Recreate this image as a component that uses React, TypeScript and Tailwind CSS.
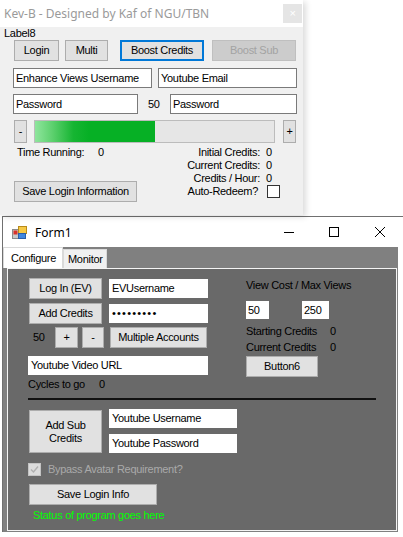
import React from 'react';
import { twMerge } from 'tailwind-merge';

// small helpers for the classic WinForms controls
const Btn = ({
  className = '',
  children,
}: {
  className?: string;
  children: React.ReactNode;
}) => (
  <div
    className={twMerge(
      'flex shrink-0 items-center justify-center border border-[#adadad] bg-[#e1e1e1] text-center text-black',
      className
    )}
  >
    {children}
  </div>
);

const Box = ({
  className = '',
  children,
}: {
  className?: string;
  children?: React.ReactNode;
}) => (
  <div className={twMerge('flex shrink-0 items-center bg-white pl-[2px] text-black', className)}>
    {children}
  </div>
);

const FormIcon = () => (
  <svg width="15" height="14" viewBox="0 0 15 14">
    <rect x="0.5" y="3.5" width="6" height="9" fill="#c9c9c9" stroke="#8a8a8a" />
    <rect x="1.5" y="4.5" width="4" height="4" fill="#d8322a" />
    <rect x="6.5" y="0.5" width="8" height="7" fill="#f6c945" stroke="#b88a1a" />
    <rect x="6.5" y="7.5" width="7" height="5" fill="#3f86e0" stroke="#2a5fa8" />
  </svg>
);

const KevWindow = () => (
  <div className="relative z-10 h-[215px] w-[303px] bg-[#f0f0f0] shadow-[3px_2px_6px_rgba(0,0,0,0.14)]">
    <div className="flex h-[27px] items-center bg-white">
      <span className="ml-[4px] font-['Noto_Sans',sans-serif] text-[12px] tracking-normal text-[#9a9a9a]">
        Kev-B - Designed by Kaf of NGU/TBN
      </span>
      <div className="ml-auto mr-[1px] flex h-[19px] w-[19px] items-center justify-center bg-[#e5e5e5] text-[11px] text-white">
        ×
      </div>
    </div>

    <div className="h-[13px] pl-[4px] text-black">Label8</div>

    <div className="flex h-[21px]">
      <Btn className="ml-[14px] w-[45px]">Login</Btn>
      <Btn className="ml-[6px] w-[43px]">Multi</Btn>
      <Btn className="ml-[12px] w-[84px] border-2 border-[#0078d7]">Boost Credits</Btn>
      <Btn className="ml-[8px] w-[84px] border-[#bfbfbf] bg-[#cccccc] text-[#a3a3a3]">Boost Sub</Btn>
    </div>

    <div className="mt-[7px] flex h-[20px]">
      <Box className="ml-[13px] w-[139px] border border-[#7a7a7a]">Enhance Views Username</Box>
      <Box className="ml-[6px] w-[139px] border border-[#7a7a7a]">Youtube Email</Box>
    </div>

    <div className="mt-[6px] flex h-[20px] items-center">
      <Box className="ml-[13px] h-[20px] w-[125px] border border-[#7a7a7a]">Password</Box>
      <span className="ml-[10px] w-[22px]">50</span>
      <Box className="h-[20px] w-[127px] border border-[#7a7a7a]">Password</Box>
    </div>

    <div className="mt-[6px] flex h-[23px]">
      <Btn className="ml-[14px] w-[13px]">-</Btn>
      <div className="ml-[7px] h-[23px] w-[241px] border border-[#bcbcbc] bg-[#e6e6e6]">
        <div className="h-full w-[120px] bg-[linear-gradient(90deg,#8fe59d_0%,#5fd170_14%,#16b532_32%,#06b025_45%,#06b025_100%)]" />
      </div>
      <Btn className="ml-[8px] w-[13px]">+</Btn>
    </div>

    <div className="mt-[3px] flex">
      <div className="flex flex-col pl-[14px]">
        <div className="flex h-[13px] pl-[3px]">
          <span className="w-[81px]">Time Running:</span>
          <span>0</span>
        </div>
        <Btn className="mt-[22px] h-[21px] w-[123px]">Save Login Information</Btn>
      </div>
      <div className="ml-auto mr-[23px] flex flex-col">
        <div className="flex h-[13px]">
          <span className="w-[76px] text-right">Initial Credits:</span>
          <span className="ml-[6px]">0</span>
        </div>
        <div className="flex h-[13px]">
          <span className="w-[76px] text-right">Current Credits:</span>
          <span className="ml-[6px]">0</span>
        </div>
        <div className="flex h-[13px]">
          <span className="w-[76px] text-right">Credits / Hour:</span>
          <span className="ml-[6px]">0</span>
        </div>
        <div className="flex h-[13px] items-center">
          <span className="w-[74px] text-right">Auto-Redeem?</span>
          <div className="ml-[9px] h-[13px] w-[13px] border border-[#333] bg-white" />
        </div>
      </div>
    </div>
  </div>
);

const Form1 = () => (
  <div className="ml-[2px] mt-[1px] w-[401px] border-l border-t border-[#707070] bg-white">
    <div className="flex h-[30px] items-center">
      <div className="ml-[9px] mt-[1px]">
        <FormIcon />
      </div>
      <span className="ml-[8px] font-['Noto_Sans',sans-serif] text-[12px] tracking-normal text-black">Form1</span>
      <svg className="ml-auto" width="10" height="10" viewBox="0 0 10 10">
        <line x1="0" y1="5.5" x2="10" y2="5.5" stroke="#000" strokeWidth="1" />
      </svg>
      <svg className="ml-[35px]" width="10" height="10" viewBox="0 0 10 10">
        <rect x="0.5" y="0.5" width="9" height="9" fill="none" stroke="#000" strokeWidth="1" />
      </svg>
      <svg className="ml-[36px] mr-[18px]" width="10" height="10" viewBox="0 0 10 10">
        <line x1="0" y1="0" x2="10" y2="10" stroke="#000" strokeWidth="1" />
        <line x1="10" y1="0" x2="0" y2="10" stroke="#000" strokeWidth="1" />
      </svg>
    </div>

    <div className="h-[285px] w-[395px] bg-[#808080]">
      <div className="flex h-[21px] items-end">
        <div className="flex h-[21px] w-[60px] items-center border-x border-t border-[#d9d9d9] bg-white pl-[7px] text-black">
          Configure
        </div>
        <div className="flex h-[19px] w-[44px] items-center border border-b-0 border-[#d9d9d9] bg-[#f0f0f0] pl-[4px] text-black">
          Monitor
        </div>
      </div>

      <div className="ml-[4px] h-[263px] w-[390px] border border-[#f4f4f4] bg-[#696969] text-black">
        <div className="flex pt-[9px]">
          <div className="ml-[20px] flex w-[180px] flex-col">
            <div className="flex h-[21px]">
              <Btn className="ml-[1px] w-[73px]">Log In (EV)</Btn>
              <Box className="ml-[7px] mt-[1px] h-[19px] w-[99px] pl-[3px]">EVUsername</Box>
            </div>
            <div className="mt-[4px] flex h-[21px]">
              <Btn className="ml-[1px] w-[73px]">Add Credits</Btn>
              <Box className="ml-[7px] mt-[1px] h-[19px] w-[99px] pl-[3px] text-[11px] tracking-[1.2px]">
                •••••••••
              </Box>
            </div>
            <div className="mt-[3px] flex h-[21px] items-center">
              <span className="ml-[5px] w-[22px]">50</span>
              <Btn className="h-[21px] w-[23px]">+</Btn>
              <Btn className="ml-[4px] h-[21px] w-[22px]">-</Btn>
              <Btn className="ml-[6px] h-[21px] w-[97px]">Multiple Accounts</Btn>
            </div>
            <Box className="mt-[8px] h-[19px] w-[180px] pl-[3px]">Youtube Video URL</Box>
            <div className="mt-[3px] flex h-[13px]">
              <span className="w-[71px]">Cycles to go</span>
              <span>0</span>
            </div>
          </div>

          <div className="ml-[38px] mt-[1px] flex flex-col">
            <div className="h-[13px]">View Cost / Max Views</div>
            <div className="mt-[9px] flex h-[18px]">
              <Box className="h-[18px] w-[23px]">50</Box>
              <Box className="ml-[33px] h-[18px] w-[27px]">250</Box>
            </div>
            <div className="mt-[6px] flex h-[13px]">
              <span className="w-[84px]">Starting Credits</span>
              <span>0</span>
            </div>
            <div className="mt-[3px] flex h-[13px]">
              <span className="w-[84px]">Current Credits</span>
              <span>0</span>
            </div>
            <Btn className="mt-[2px] h-[21px] w-[72px]">Button6</Btn>
          </div>
        </div>

        <div className="ml-[20px] mt-[7px] h-[2px] w-[348px] bg-[#111]" />

        <div className="mt-[9px] flex">
          <Btn className="ml-[21px] mt-[1px] h-[43px] w-[73px] leading-[13px]">
            Add Sub
            <br />
            Credits
          </Btn>
          <div className="ml-[7px] flex flex-col">
            <Box className="h-[19px] w-[128px] pl-[3px]">Youtube Username</Box>
            <Box className="mt-[6px] h-[19px] w-[128px] pl-[3px]">Youtube Password</Box>
          </div>
        </div>

        <div className="mt-[10px] flex h-[13px] items-center">
          <div className="ml-[20px] flex h-[13px] w-[13px] items-center justify-center border border-[#c4c4c4] bg-[#dcdcdc]">
            <svg width="9" height="9" viewBox="0 0 9 9">
              <path d="M1 4.5 L3.5 7 L8 1.5" fill="none" stroke="#b0b0b0" strokeWidth="1.4" />
            </svg>
          </div>
          <span className="ml-[7px] text-[#a9a9a9]">Bypass Avatar Requirement?</span>
        </div>

        <Btn className="ml-[21px] mt-[8px] h-[21px] w-[128px]">Save Login Info</Btn>

        <div className="ml-[25px] mt-[4px] h-[13px] text-[#00ff00]">Status of program goes here</div>
      </div>
    </div>
  </div>
);

const App = () => {
  return (
    <div className="h-[537px] w-[403px] overflow-hidden bg-white font-['Liberation_Sans',Arial,sans-serif] text-[11px] leading-[13px] tracking-[-0.3px]">
      <KevWindow />
      <Form1 />
    </div>
  );
};

export default App;
